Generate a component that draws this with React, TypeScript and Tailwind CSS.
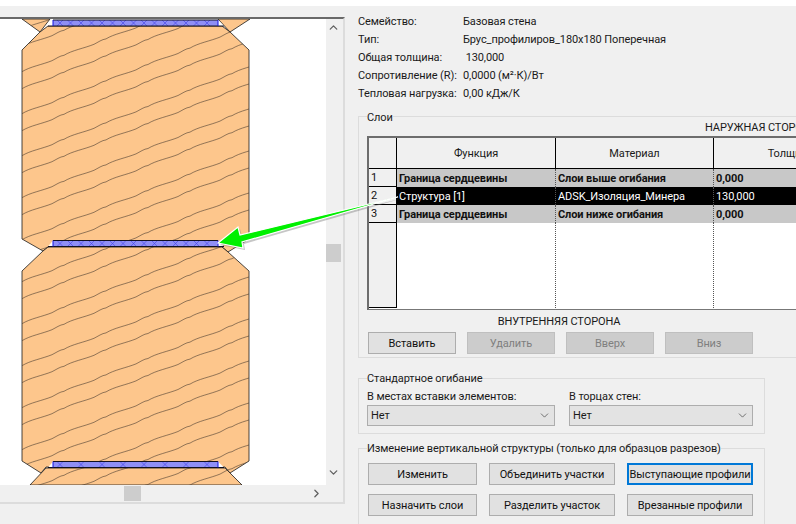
import { ChevronDown, ChevronRight, ChevronUp } from "lucide-react";

const beams = [
  "22,20 40,33 50,20",
  "218,20 250,20 230,33",
  "48,27 222,27 230,33 249,51 249,240 228,253 222,248 48,248 43,252 22,240 22,51 40,33",
  "48,248 222,248 228,253 249,272 249,462 230,474 225,468 46,468 41,474 22,462 22,272 43,252",
  "46,469 225,469 242,486 30,486",
];

// wavy timber grain, two lines per 42px step
const grainLines: string[] = [];
for (let k = -3; k < 14; k++) {
  for (const offset of [0, 17]) {
    let d = `M22 ${72.7 + k * 42 + offset}`;
    for (let i = 0; i < 6; i++) d += " c8,-5 20,-7 30,-11 c4,-2 8,-5 12,-5.4";
    grainLines.push(d);
  }
}

const strips = [
  { y: 21, step: 10.5 },
  { y: 241.5, step: 10.5 },
  { y: 462.5, step: 21 },
];

function crosses(y: number, step: number) {
  let d = "";
  for (let x = 60; x < 216; x += step) {
    d += `M${x - 3} ${y} L${x + 3} ${y + 6} M${x + 3} ${y} L${x - 3} ${y + 6} `;
  }
  return d;
}

function Drawing() {
  return (
    <svg width="326" height="466" viewBox="0 20 326 466" className="block">
      <defs>
        <clipPath id="beamClip">
          {beams.map((p) => (
            <polygon key={p} points={p} />
          ))}
        </clipPath>
      </defs>
      {beams.map((p) => (
        <polygon key={p} points={p} fill="#fdc68c" stroke="#1a1a1a" strokeWidth="0.8" />
      ))}
      <g clipPath="url(#beamClip)">
        {grainLines.map((d) => (
          <path key={d} d={d} fill="none" stroke="#4a3c30" strokeWidth="0.6" />
        ))}
      </g>
      {strips.map(({ y, step }) => (
        <g key={y}>
          <polygon points={`48,${y + 6} 53,${y} 53,${y + 6}`} fill="#fff" />
          <polygon points={`218,${y} 218,${y + 6} 224,${y + 6}`} fill="#fff" />
          <rect x="53" y={y} width="165" height="6" fill="#8f8ff5" />
          <path d={crosses(y, step)} stroke="#4040e8" strokeWidth="0.6" fill="none" />
          <path d={`M53 ${y} H218 M48 ${y + 6} H224`} stroke="#101020" strokeWidth="1" />
          <path d={`M53 ${y} V${y + 6} M218 ${y} V${y + 6}`} stroke="#1212e0" strokeWidth="1" />
        </g>
      ))}
    </svg>
  );
}

function Arrow() {
  return (
    <svg width="796" height="524" viewBox="0 0 796 524" className="absolute left-0 top-0 pointer-events-none">
      <polygon
        points="218,243 238,227 240,235 398,197 242,242 243,248"
        fill="#808080"
        opacity="0.45"
        transform="translate(2,2)"
      />
      <polygon
        points="218,243 238,227 240,235 398,197 242,242 243,248"
        fill="#00f000"
        stroke="#ffffff"
        strokeWidth="1.2"
        strokeLinejoin="miter"
      />
    </svg>
  );
}

function Btn({ label, w, disabled, focus }: { label: string; w: string; disabled?: boolean; focus?: boolean }) {
  return (
    <div
      className={`${w} h-[22px] flex items-center justify-center whitespace-nowrap border ${
        disabled
          ? "bg-[#cccccc] border-[#bfbfbf] text-[#7f7f7f]"
          : focus
            ? "bg-[#e1e1e1] border-2 border-[#0078d7] text-[#111]"
            : "bg-[#e1e1e1] border-[#adadad] text-[#111]"
      }`}
    >
      {label}
    </div>
  );
}

function Select({ w }: { w: string }) {
  return (
    <div className={`${w} h-[21px] bg-[#e3e3e3] border border-[#adadad] flex items-center justify-between pl-[3px] pr-[3px]`}>
      <span>Нет</span>
      <ChevronDown size={13} strokeWidth={1.2} color="#333" />
    </div>
  );
}

const rows = [
  { n: "1", fn: "Граница сердцевины", mat: "Слои выше огибания", th: "0,000" },
  { n: "2", fn: "Структура [1]", mat: "ADSK_Изоляция_Минера", th: "130,000", selected: true },
  { n: "3", fn: "Граница сердцевины", mat: "Слои ниже огибания", th: "0,000" },
];

const info = [
  ["Семейство:", "Базовая стена"],
  ["Тип:", "Брус_профилиров_180x180 Поперечная"],
  ["Общая толщина:", " 130,000"],
  ["Сопротивление (R):", "0,0000 (м²·К)/Вт"],
  ["Тепловая нагрузка:", "0,00 кДж/К"],
];

export default function App() {
  return (
    <div className="relative w-[796px] h-[524px] overflow-hidden bg-[#f0f0f0] text-[11px] tracking-[-0.1px] text-[#1a1a1a] font-['Roboto',sans-serif] leading-none">
      <div className="h-[6px] bg-white" />
      <div className="flex h-[518px]">
        {/* Preview */}
        <div className="w-[345px] pt-[11px] shrink-0">
          <div className="border-t-2 border-t-[#696969] border-r-2 border-b-2 border-r-[#dcdcdc] border-b-[#dcdcdc]">
            <div className="flex h-[466px]">
              <div className="w-[326px] bg-white overflow-hidden">
                <Drawing />
              </div>
              <div className="w-[15px] flex flex-col items-center relative">
                <ChevronUp size={13} strokeWidth={2.4} color="#606060" className="mt-[2px]" />
                <div className="w-[15px] h-[18px] bg-[#cdcdcd] mt-[210px]" />
                <ChevronDown size={13} strokeWidth={2.4} color="#606060" className="mt-[204px]" />
              </div>
            </div>
            <div className="h-[17px] flex items-center w-[326px]">
              <div className="w-[17px] h-[15px] bg-[#cdcdcd] ml-[124px]" />
              <ChevronRight size={13} strokeWidth={2.4} color="#606060" className="ml-[169px]" />
            </div>
          </div>
        </div>

        {/* Properties */}
        <div className="flex-1 min-w-0 overflow-hidden pl-[13px]">
          <div className="flex flex-col pt-[6px]">
            {info.map(([label, value]) => (
              <div key={label} className="flex h-[18px] items-center">
                <span className="w-[105px] shrink-0 whitespace-nowrap">{label}</span>
                <span className="whitespace-pre">{value}</span>
              </div>
            ))}
          </div>

          {/* Layers */}
          <fieldset className="mt-[9px] w-[520px] h-[247px] border border-[#dcdcdc] pl-[8px] pr-0">
            <legend className="h-[11px] leading-[11px] translate-y-[1px]">Слои</legend>
            <div className="h-[11px] mb-[3px] pl-[338px] whitespace-nowrap flex items-center">НАРУЖНАЯ СТОРОНА</div>
            <div className="w-[500px] h-[174px] border-t-2 border-l-2 border-[#6d6d6d] bg-white border-b border-b-[#777]">
              <div className="flex h-[31px] bg-[#f0f0f0] border-b border-black">
                <div className="w-[28px] border-r border-black" />
                <div className="w-[159px] border-r border-black flex items-center justify-center">Функция</div>
                <div className="w-[158px] border-r border-black flex items-center justify-center">Материал</div>
                <div className="flex-1 flex items-center justify-center">Толщина</div>
              </div>
              {rows.map((r) => (
                <div
                  key={r.n}
                  className={`flex h-[18px] items-center ${
                    r.selected ? "bg-black text-white" : "bg-[#c8c8c8] font-bold text-[#111]"
                  }`}
                >
                  <div className="w-[28px] h-full bg-[#f0f0f0] border-r border-b border-black text-[#111] font-normal flex items-center pl-[2px]">
                    {r.n}
                  </div>
                  <div className="w-[159px] h-full border-r border-dotted border-[#555] flex items-center pl-[2px] whitespace-nowrap">{r.fn}</div>
                  <div className="w-[158px] h-full border-r border-dotted border-[#555] flex items-center pl-[2px] whitespace-nowrap">{r.mat}</div>
                  <div className="flex-1 h-full flex items-center pl-[2px]">{r.th}</div>
                </div>
              ))}
              <div className="flex h-[85px]">
                <div className="w-[28px] bg-[#f0f0f0] border-r border-b border-black" />
                <div className="w-[159px] border-r border-dotted border-[#555]" />
                <div className="w-[158px] border-r border-dotted border-[#555]" />
              </div>
            </div>
            <div className="h-[22px] w-[384px] flex items-center justify-center whitespace-nowrap">ВНУТРЕННЯЯ СТОРОНА</div>
            <div className="flex gap-[11px] pl-[1px]">
              <Btn label="Вставить" w="w-[88px]" />
              <Btn label="Удалить" w="w-[88px]" disabled />
              <Btn label="Вверх" w="w-[88px]" disabled />
              <Btn label="Вниз" w="w-[88px]" disabled />
            </div>
          </fieldset>

          {/* Default wrapping */}
          <fieldset className="mt-[15px] w-[407px] h-[61px] border border-[#dcdcdc] pl-[8px]">
            <legend className="h-[11px] leading-[11px]">Стандартное огибание</legend>
            <div className="flex mt-[6px] h-[13px] items-center">
              <span className="w-[202px]">В местах вставки элементов:</span>
              <span>В торцах стен:</span>
            </div>
            <div className="flex mt-[2px] gap-[14px]">
              <Select w="w-[188px]" />
              <Select w="w-[184px]" />
            </div>
          </fieldset>

          {/* Vertical structure */}
          <fieldset className="mt-[9px] w-[407px] h-[90px] border border-[#dcdcdc] pl-[9px]">
            <legend className="-ml-[1px] h-[11px] leading-[11px] whitespace-nowrap">
              Изменение вертикальной структуры (только для образцов разрезов)
            </legend>
            <div className="mt-[9px] flex flex-col gap-[9px]">
              <div className="flex">
                <Btn label="Изменить" w="w-[109px] mr-[12px]" />
                <Btn label="Объединить участки" w="w-[126px] mr-[12px]" />
                <Btn label="Выступающие профили" w="w-[126px]" focus />
              </div>
              <div className="flex">
                <Btn label="Назначить слои" w="w-[109px] mr-[12px]" />
                <Btn label="Разделить участок" w="w-[126px] mr-[12px]" />
                <Btn label="Врезанные профили" w="w-[126px]" />
              </div>
            </div>
          </fieldset>
        </div>
      </div>
      <Arrow />
    </div>
  );
}
